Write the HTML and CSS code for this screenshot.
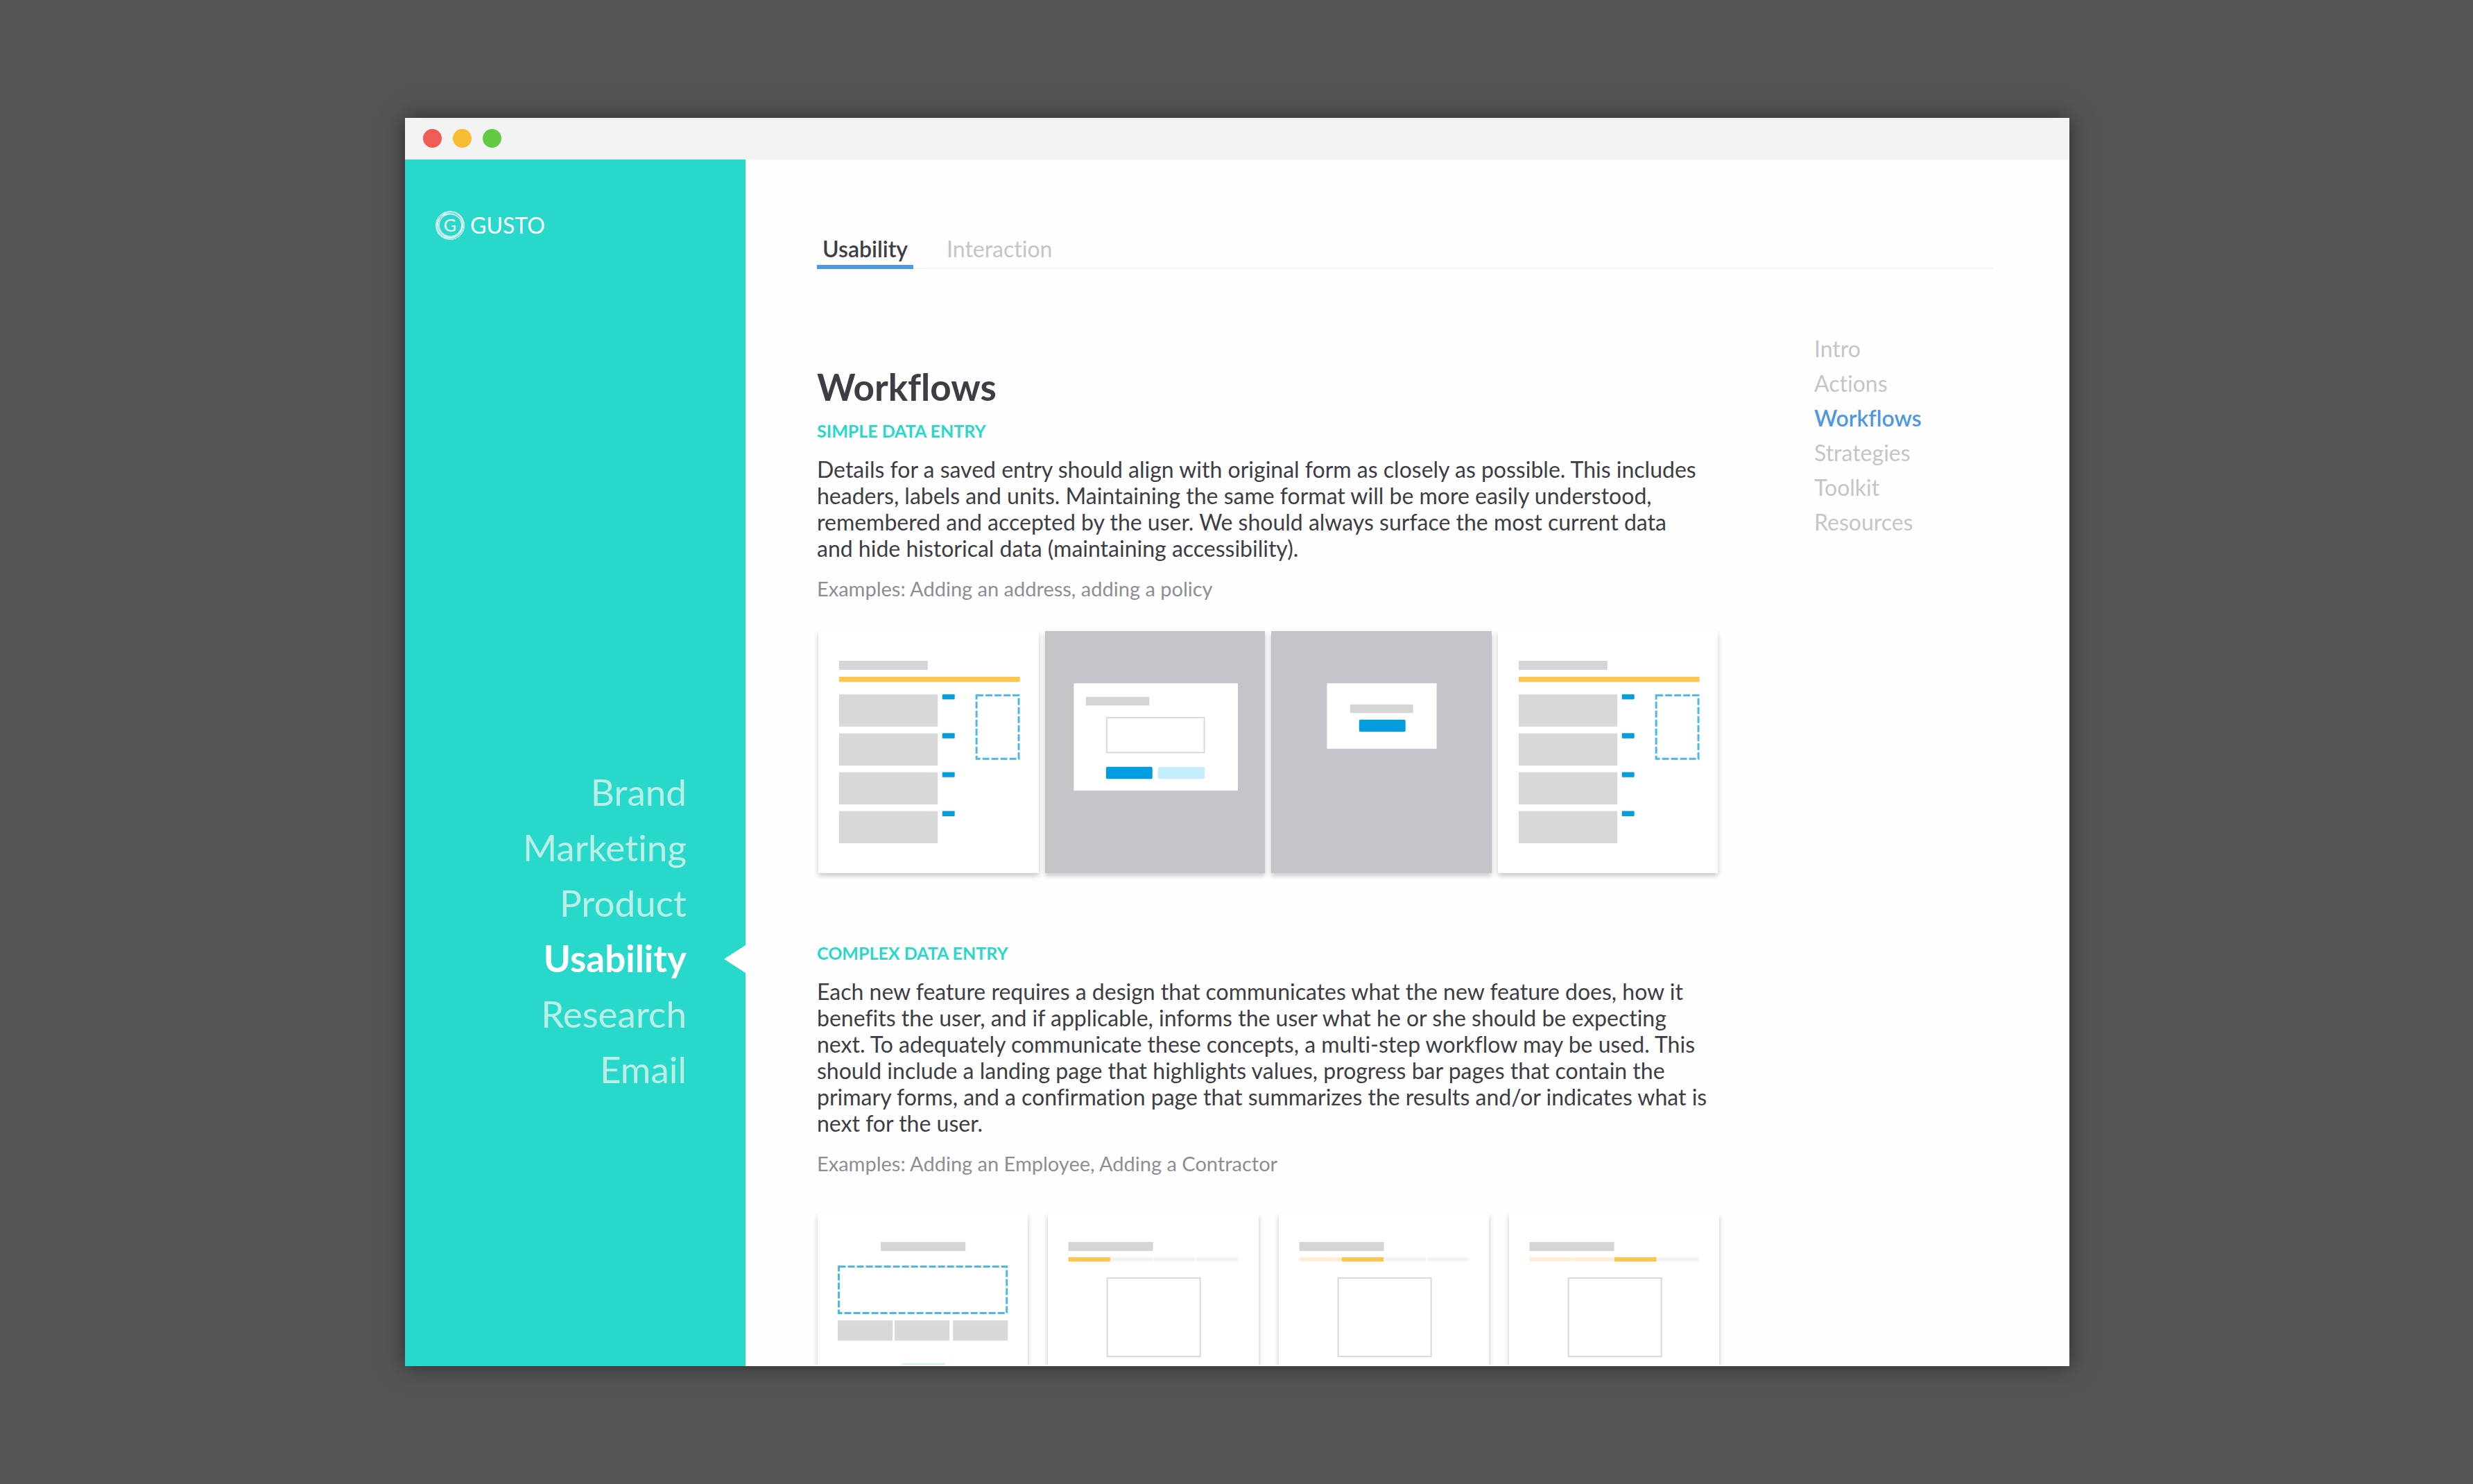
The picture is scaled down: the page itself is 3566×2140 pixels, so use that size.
FILE: index.html
```html
<!DOCTYPE html>
<html lang="en">
<head>
  <meta charset="utf-8">
  <meta name="viewport" content="width=device-width, initial-scale=1">
  <title>Gusto – Usability</title>
  <link rel="stylesheet" href="styles.css">
</head>
<body>
  <!-- Shapes shared by the workflow thumbnails -->
  <svg class="defs" aria-hidden="true">
    <symbol id="list-page" viewBox="0 0 318 350">
      <rect class="t-title" x="30" y="43" width="128" height="13"/>
      <rect class="t-yellow" x="30" y="66" width="261" height="7.5"/>
      <g class="t-block">
        <rect x="30" y="91.5" width="142.5" height="46.5"/>
        <rect x="30" y="147.8" width="142.5" height="46.5"/>
        <rect x="30" y="204" width="142.5" height="46.5"/>
        <rect x="30" y="260" width="142.5" height="46.5"/>
      </g>
      <g class="t-blue">
        <rect x="179" y="91.3" width="18" height="7.4" rx="1"/>
        <rect x="179" y="147.5" width="18" height="7.4" rx="1"/>
        <rect x="179" y="203.8" width="18" height="7.4" rx="1"/>
        <rect x="179" y="260" width="18" height="7.4" rx="1"/>
      </g>
      <rect class="t-dash" x="228.5" y="93" width="61" height="91.5"/>
    </symbol>
  </svg>

  <div class="window">
    <div class="titlebar">
      <span class="light light-red"></span>
      <span class="light light-yellow"></span>
      <span class="light light-green"></span>
    </div>

    <div class="body">
      <aside class="sidebar">
        <a class="logo" href="#">
          <svg class="logo-mark" viewBox="0 0 42 42" aria-hidden="true">
            <g fill="none" stroke="#fff" stroke-width="1.1">
              <circle cx="21" cy="21" r="20.3"/>
              <ellipse cx="21.6" cy="20.2" rx="18" ry="18.4"/>
              <ellipse cx="20.2" cy="21.8" rx="18.2" ry="17.8"/>
              <circle cx="21.4" cy="20.8" r="16.2"/>
            </g>
            <text x="21" y="30" text-anchor="middle">G</text>
          </svg>
          <span>GUSTO</span>
        </a>
        <nav class="main-nav" aria-label="Guides">
          <a href="#">Brand</a>
          <a href="#">Marketing</a>
          <a href="#">Product</a>
          <a href="#" class="active" aria-current="page">Usability</a>
          <a href="#">Research</a>
          <a href="#">Email</a>
        </nav>
      </aside>

      <main class="content">
        <nav class="tabs" aria-label="Sections">
          <a href="#" class="active" aria-current="page">Usability</a>
          <a href="#">Interaction</a>
        </nav>

        <div class="columns">
          <article class="article">
            <h1>Workflows</h1>

            <section>
              <h2>SIMPLE DATA ENTRY</h2>
              <p class="text">Details for a saved entry should align with original form as closely as possible. This includes headers, labels and units. Maintaining the same format will be more easily understood, remembered and accepted by the user. We should always surface the most current data<br>and hide historical data (maintaining accessibility).</p>
              <p class="examples">Examples: Adding an address, adding a policy</p>
              <div class="cards cards-simple">
                <svg class="card" viewBox="0 0 318 350"><use href="#list-page"/></svg>
                <svg class="card card-dim" viewBox="0 0 318 350">
                  <rect class="t-modal" x="41.5" y="75.5" width="237" height="155"/>
                  <rect class="t-title" x="59" y="95" width="91.5" height="12.5"/>
                  <rect class="t-box" x="89" y="125" width="141" height="50.5"/>
                  <rect class="t-blue" x="88" y="196" width="67" height="17.5" rx="2"/>
                  <rect class="t-pale" x="163" y="196" width="67.5" height="17.5" rx="2"/>
                </svg>
                <svg class="card card-dim" viewBox="0 0 318 350">
                  <rect class="t-modal" x="80.5" y="75.5" width="158.5" height="94.5"/>
                  <rect class="t-title" x="114" y="106" width="91" height="12.5"/>
                  <rect class="t-blue" x="127" y="128" width="67" height="17.5" rx="2"/>
                </svg>
                <svg class="card" viewBox="0 0 318 350"><use href="#list-page"/></svg>
              </div>
            </section>

            <section>
              <h2>COMPLEX DATA ENTRY</h2>
              <p class="text">Each new feature requires a design that communicates what the new feature does, how it benefits the user, and if applicable, informs the user what he or she should be expecting next. To adequately communicate these concepts, a multi-step workflow may be used. This should include a landing page that highlights values, progress bar pages that contain the primary forms, and a confirmation page that summarizes the results and/or indicates what is next for the user.</p>
              <p class="examples">Examples: Adding an Employee, Adding a Contractor</p>
              <div class="cards cards-complex">
                <svg class="card" viewBox="0 0 303 350">
                  <rect class="t-title" x="91" y="41" width="122" height="13"/>
                  <rect class="t-dash" x="30.5" y="76.5" width="242" height="67"/>
                  <g class="t-block">
                    <rect x="29" y="154" width="79" height="29"/>
                    <rect x="111" y="154" width="79" height="29"/>
                    <rect x="195" y="154" width="79" height="29"/>
                  </g>
                  <rect class="t-pale" x="120" y="216" width="64" height="18" rx="2"/>
                </svg>
                <svg class="card" viewBox="0 0 303 350">
                  <rect class="t-title" x="29.5" y="41" width="122" height="13"/>
                  <rect class="t-yellow" x="29.5" y="63" width="60.5" height="6"/>
                  <rect class="t-track" x="91.5" y="63" width="59.5" height="6"/>
                  <rect class="t-track" x="152.5" y="63" width="59.5" height="6"/>
                  <rect class="t-track" x="213.5" y="63" width="60" height="6"/>
                  <rect class="t-box" x="85.5" y="93" width="134" height="113"/>
                </svg>
                <svg class="card" viewBox="0 0 303 350">
                  <rect class="t-title" x="29.5" y="41" width="122" height="13"/>
                  <rect class="t-done" x="29.5" y="63" width="60.5" height="6"/>
                  <rect class="t-yellow" x="90.5" y="63" width="60.5" height="6"/>
                  <rect class="t-track" x="152.5" y="63" width="59.5" height="6"/>
                  <rect class="t-track" x="213.5" y="63" width="60" height="6"/>
                  <rect class="t-box" x="85.5" y="93" width="134" height="113"/>
                </svg>
                <svg class="card" viewBox="0 0 303 350">
                  <rect class="t-title" x="29.5" y="41" width="122" height="13"/>
                  <rect class="t-done" x="29.5" y="63" width="60.5" height="6"/>
                  <rect class="t-done" x="91.5" y="63" width="59.5" height="6"/>
                  <rect class="t-yellow" x="152" y="63" width="60.5" height="6"/>
                  <rect class="t-track" x="213.5" y="63" width="60" height="6"/>
                  <rect class="t-box" x="85.5" y="93" width="134" height="113"/>
                </svg>
              </div>
            </section>
          </article>

          <nav class="page-nav" aria-label="On this page">
            <a href="#">Intro</a>
            <a href="#">Actions</a>
            <a href="#" class="active" aria-current="true">Workflows</a>
            <a href="#">Strategies</a>
            <a href="#">Toolkit</a>
            <a href="#">Resources</a>
          </nav>
        </div>
      </main>
    </div>
  </div>
</body>
</html>
```
FILE: styles.css
```css
* {
  box-sizing: border-box;
}

body {
  margin: 0;
  padding: 170px 582px 170px 584px;
  background: #555;
  color: #3d3d45;
  font-family: Lato, "Open Sans", sans-serif;
  font-size: 32px;
  line-height: 38px;
  font-variant-ligatures: none;
}

a {
  color: inherit;
  text-decoration: none;
}

h1,
h2,
p {
  margin: 0;
}

.defs {
  position: absolute;
  width: 0;
  height: 0;
}

/* Window frame */
.window {
  display: flex;
  flex-direction: column;
  height: calc(100vh - 340px);
  background: #fefefe;
  box-shadow: 0 0 30px rgba(0, 0, 0, 0.5);
}

.titlebar {
  display: flex;
  flex: none;
  align-items: center;
  gap: 16px;
  height: 60px;
  padding: 0 26px 2px;
  background: #f3f3f3;
}

.light {
  width: 27px;
  height: 27px;
  border-radius: 50%;
}

.light-red {
  background: #ee5c55;
}

.light-yellow {
  background: #f8bc33;
}

.light-green {
  background: #62ca44;
}

.body {
  display: flex;
  flex: 1;
  min-height: 0;
}

/* Sidebar */
.sidebar {
  display: flex;
  flex: none;
  flex-direction: column;
  justify-content: space-between;
  width: 491px;
  padding: 74px 0 388px;
  background: #27d8cb;
}

.logo {
  display: flex;
  align-items: center;
  gap: 8px;
  padding-left: 44px;
  color: #fff;
  line-height: 42px;
}

.logo-mark {
  width: 42px;
  height: 42px;
  fill: #fff;
  font-size: 25px;
}

.main-nav {
  display: flex;
  flex-direction: column;
  color: #bbeee4;
  font-size: 53px;
  line-height: 80px;
  text-align: right;
}

.main-nav a {
  position: relative;
  padding-right: 85px;
}

.main-nav .active {
  color: #fff;
  font-weight: 700;
}

.main-nav .active::after {
  content: "";
  position: absolute;
  top: 21px;
  right: 0;
  width: 31px;
  height: 40px;
  background: #fefefe;
  clip-path: polygon(0 50%, 100% 0, 100% 100%);
}

/* Content */
.content {
  flex: 1;
  min-width: 0;
  margin-bottom: 2px;
  padding: 108px 110px 0 103px;
  overflow: hidden;
}

.tabs {
  display: flex;
  gap: 40px;
  border-bottom: 2px solid #f3f3f3;
  color: #c4c5ca;
}

.tabs a {
  margin-bottom: -2px;
  padding: 2px 8px 4px;
  border-bottom: 6px solid transparent;
}

.tabs .active {
  border-color: #4f98e0;
  color: #3d3d45;
  font-weight: 600;
}

.columns {
  display: grid;
  grid-template-columns: minmax(0, 1fr) 258px;
  gap: 136px;
}

h1 {
  margin: 138px 0 16px;
  font-size: 53px;
  line-height: 64px;
}

h2 {
  margin-bottom: 22px;
  color: #27d8cb;
  font-size: 25px;
  line-height: 30px;
}

.text {
  padding-right: 14px;
}

.examples {
  margin-top: 22px;
  color: #8c8e96;
  font-size: 29px;
  line-height: 34px;
}

section + section {
  margin-top: 100px;
}

.page-nav {
  display: flex;
  flex-direction: column;
  margin-top: 90px;
  color: #c4c5ca;
  line-height: 50px;
}

.page-nav .active {
  color: #4f98e0;
  font-weight: 600;
}

/* Workflow thumbnails */
.cards {
  display: grid;
  grid-template-columns: repeat(4, 1fr);
}

.cards-simple {
  gap: 9px;
  margin: 44px 3px 0 2px;
}

.cards-complex {
  gap: 29px;
  margin: 55px 1px 0;
}

.card {
  display: block;
  width: 100%;
  background: #fff;
  box-shadow: 0 4px 7px rgba(0, 0, 0, 0.22);
}

.card-dim {
  background: #c4c5c9;
}

.t-title {
  fill: #d4d5d7;
}

.t-block {
  fill: #d8d8d8;
}

.t-yellow {
  fill: #ffc44a;
}

.t-done {
  fill: #ffedd6;
}

.t-track {
  fill: #f3f3f3;
}

.t-blue {
  fill: #029de0;
}

.t-pale {
  fill: #c5edfb;
}

.t-modal {
  fill: #fff;
}

.t-box {
  fill: none;
  stroke: #d9d9db;
  stroke-width: 2;
}

.t-dash {
  fill: none;
  stroke: #4db8e8;
  stroke-width: 3;
  stroke-dasharray: 10 3;
}
```
